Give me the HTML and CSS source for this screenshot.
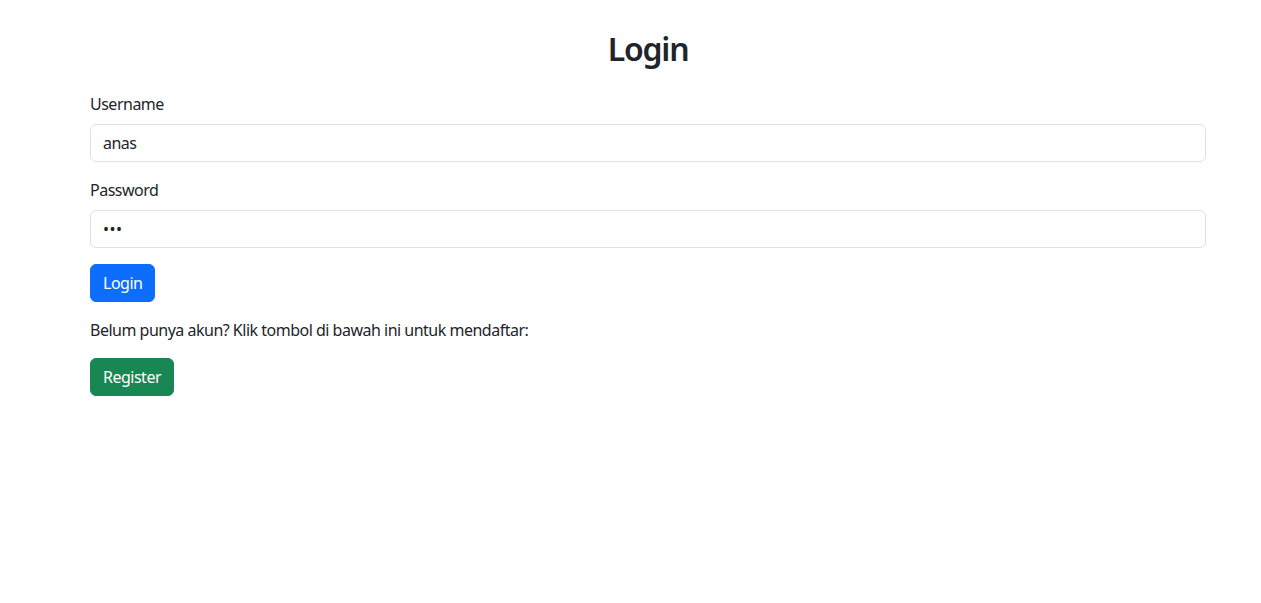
FILE: index.html
```html
<!DOCTYPE html>
<html lang="id">
<head>
<meta charset="utf-8">
<title>Login</title>
<link rel="stylesheet" href="styles.css">
</head>
<body>
<div class="container">
  <h2 class="title">Login</h2>
  <form class="form">
    <div class="field">
      <label class="label" for="username">Username</label>
      <input class="input" id="username" type="text" value="anas">
    </div>
    <div class="field">
      <label class="label" for="password">Password</label>
      <input class="input input-pass" id="password" type="password" value="abc">
    </div>
    <button type="button" class="btn btn-primary">Login</button>
  </form>
  <p class="hint">Belum punya akun? Klik tombol di bawah ini untuk mendaftar:</p>
  <button type="button" class="btn btn-success">Register</button>
</div>
</body>
</html>
```
FILE: styles.css
```css
* { box-sizing: border-box; }
html, body { margin: 0; padding: 0; background: #fff; }
body {
  font-family: "Noto Sans", "Open Sans", sans-serif;
  font-size: 16px;
  line-height: 1.5;
  color: #212529;
  letter-spacing: -0.5px;
}
.container {
  width: 1116px;
  margin-left: 90px;
  padding-top: 30px;
}
.title {
  margin: 0 0 24px;
  font-size: 32px;
  font-weight: 600;
  line-height: 1.2;
  text-align: center;
  letter-spacing: -1.2px;
}
.form { margin: 0; }
.field { margin-bottom: 16px; }
.label {
  display: block;
  margin-bottom: 8px;
  font-size: 16px;
}
.input {
  display: block;
  width: 100%;
  height: 38px;
  padding: 6px 12px;
  font: inherit;
  letter-spacing: inherit;
  color: #212529;
  background: #fff;
  border: 1px solid #dee2e6;
  border-radius: 6px;
  outline: none;
}
.input-pass { letter-spacing: 0.5px; }
.btn {
  display: inline-block;
  height: 38px;
  padding: 6px 12px;
  font: inherit;
  letter-spacing: inherit;
  color: #fff;
  border: 1px solid transparent;
  border-radius: 6px;
  cursor: pointer;
}
.btn-primary { background: #0d6efd; border-color: #0d6efd; }
.btn-success { background: #198754; border-color: #198754; }
.hint { margin: 16px 0; }
```
